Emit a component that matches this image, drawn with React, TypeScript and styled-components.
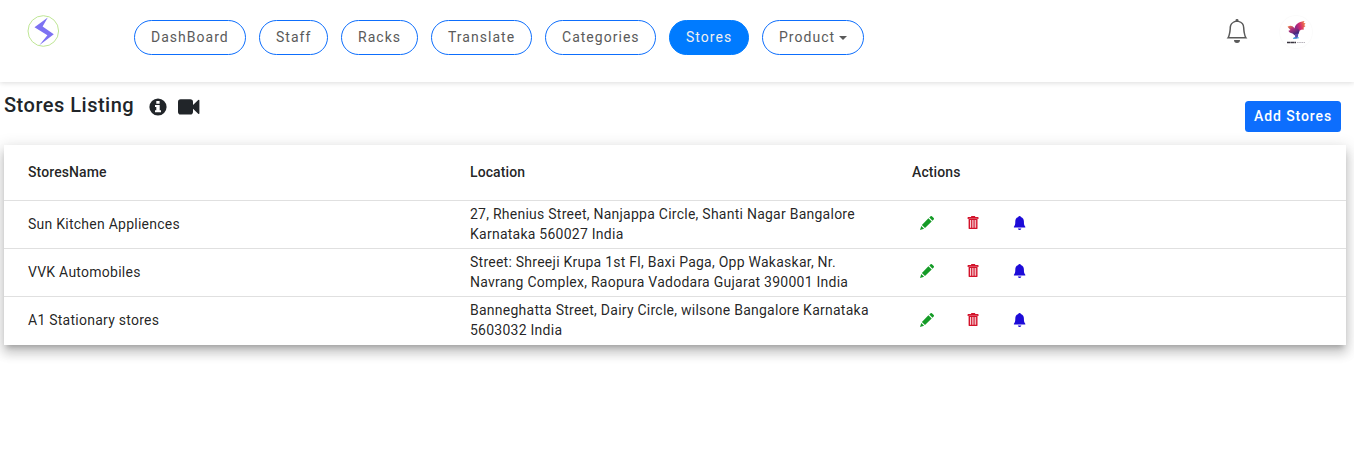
import React from 'react';
import styled, { createGlobalStyle, css } from 'styled-components';
import { BsBell } from 'react-icons/bs';

const GlobalStyle = createGlobalStyle`
  * { box-sizing: border-box; }
  body {
    margin: 0;
    min-height: 100vh;
    background: #fff;
    color: #212529;
    font-family: Roboto, 'Liberation Sans', sans-serif;
  }
`;

const Header = styled.header`
  display: flex;
  align-items: flex-start;
  height: 82px;
  padding: 15px 47px 0 27px;
  background: #fff;
  box-shadow: 0 1px 5px rgba(0, 0, 0, 0.14);
`;

const Logo = styled.svg`
  width: 33px;
  height: 33px;
  flex: none;
`;

const Nav = styled.nav`
  display: flex;
  gap: 13px;
  margin: 5px 0 0 74px;
  flex: 1;
`;

const Pill = styled.a<{ $width: number; $active?: boolean }>`
  display: flex;
  align-items: center;
  width: ${(p) => p.$width}px;
  height: 35px;
  padding: 0 0 1px 16px;
  border: 1px solid #0d6efd;
  border-radius: 20px;
  color: #5a5a5a;
  font-size: 14px;
  letter-spacing: 1.02px;
  white-space: nowrap;
  ${(p) =>
    p.$active &&
    css`
      background: #007bff;
      border-color: #007bff;
      color: #f0f0f0;
    `}
`;

const Caret = styled.span`
  margin: 2px 0 0 4px;
  border: 4px solid transparent;
  border-top-color: currentColor;
  border-bottom: 0;
`;

const HeaderTools = styled.div`
  display: flex;
  gap: 30px;
  color: #5a5a5a;
`;

const BellIcon = styled(BsBell)`
  width: 24px;
  height: 24px;
  margin-top: 4px;
`;

const Avatar = styled.svg`
  width: 34px;
  height: 34px;
  margin-right: -6px;
`;

const TitleBar = styled.section`
  display: flex;
  justify-content: space-between;
  height: 63px;
  padding: 0 13px 0 4px;
`;

const TitleGroup = styled.div`
  display: flex;
  align-items: flex-start;
  padding-top: 11px;
`;

const Title = styled.h1`
  margin: 0 15px 0 0;
  font-size: 20px;
  line-height: 24px;
  font-weight: 500;
  letter-spacing: 0.5px;
`;

const InfoIcon = styled.svg`
  width: 18px;
  height: 18px;
  margin: 5px 11px 0 0;
`;

const VideoIcon = styled.svg`
  width: 22px;
  height: 16px;
  margin-top: 6px;
`;

const AddButton = styled.button`
  width: 96px;
  height: 31px;
  margin-top: 19px;
  padding: 0;
  border: 0;
  border-radius: 3.5px;
  background: #0d6efd;
  color: #fff;
  font: 500 14px/21px Roboto, sans-serif;
  letter-spacing: 0.9px;
`;

const Table = styled.div`
  margin: 0 8px 0 4px;
  background: #fff;
  color: rgba(0, 0, 0, 0.87);
  box-shadow: 0 5px 5px -3px rgba(0, 0, 0, 0.2), 0 8px 10px 1px rgba(0, 0, 0, 0.14),
    0 3px 14px 2px rgba(0, 0, 0, 0.12);
`;

const Actions = styled.div`
  display: flex;
  padding: 0 0 2px 8px;
  gap: 32px;
`;

const Row = styled.div<{ $head?: boolean }>`
  display: grid;
  grid-template-columns: 442px 442px 1fr;
  align-items: center;
  height: ${(p) => (p.$head ? 56 : 48)}px;
  padding: 0 0 1px 24px;
  border-bottom: 1px solid rgba(0, 0, 0, 0.12);
  font-size: 14px;
  line-height: 20px;
  font-weight: ${(p) => (p.$head ? 500 : 400)};
  letter-spacing: ${(p) => (p.$head ? 0.1 : 0.25)}px;
  &:last-child {
    padding-bottom: 2px;
    border-bottom: 0;
  }
  &:last-child ${Actions} {
    padding-bottom: 0;
  }
`;

const Cell = styled.div`
  padding-right: 40px;
`;

const ActionIcon = styled.svg`
  width: 14px;
  height: 14px;
  display: block;
`;

const Pencil = () => (
  <ActionIcon viewBox="0 0 14 14" fill="#149b26">
    <path d="M0 14 1.3 9.9 4.1 12.7ZM1.9 9 8.4 2.3 11.7 5.6 5 12.1ZM9.3 1.5 10.6.3Q11.3-.3 11.9.3L13.7 2.1Q14.3 2.7 13.7 3.4L12.5 4.7Z" />
  </ActionIcon>
);

const Trash = () => (
  <ActionIcon viewBox="-0.8 0 14 14">
    <path
      fill="#d3132b"
      fillRule="evenodd"
      d="M4.3.9V.3Q4.3 0 4.6 0H8.1Q8.4 0 8.4.3V.9H11.2Q11.7.9 11.7 1.4V3H.8V1.4Q.8.9 1.3.9ZM1.8 2.8H10.7V12.2Q10.7 13.1 9.8 13.1H2.7Q1.8 13.1 1.8 12.2ZM3.3 4V11.8H4.1V4ZM5.1 4V11.8H5.8V4ZM6.8 4V11.8H7.5V4ZM8.5 4V11.8H9.3V4Z"
    />
  </ActionIcon>
);

const SolidBell = () => (
  <ActionIcon viewBox="-0.8 0 14 14" fill="#1d0bd8">
    <path d="M6.8 0C7.6 0 8 .3 8.1.9 10.2 1.5 11.1 3.2 11.1 5.6 11.1 8.5 11.4 9.8 12.5 10.7V11.6H1.1V10.7C2.2 9.8 2.5 8.5 2.5 5.6 2.5 3.2 3.4 1.5 5.5.9 5.6.3 6 0 6.8 0ZM5 12.4H8.6Q8 14 6.8 14T5 12.4Z" />
  </ActionIcon>
);

const links = [
  { label: 'DashBoard', width: 112 },
  { label: 'Staff', width: 69 },
  { label: 'Racks', width: 77 },
  { label: 'Translate', width: 101 },
  { label: 'Categories', width: 111 },
  { label: 'Stores', width: 80, active: true },
  { label: 'Product', width: 102, menu: true },
];

const stores = [
  {
    name: 'Sun Kitchen Appliences',
    location: '27, Rhenius Street, Nanjappa Circle, Shanti Nagar Bangalore Karnataka 560027 India',
  },
  {
    name: 'VVK Automobiles',
    location:
      'Street: Shreeji Krupa 1st Fl, Baxi Paga, Opp Wakaskar, Nr. Navrang Complex, Raopura Vadodara Gujarat 390001 India',
  },
  {
    name: 'A1 Stationary stores',
    location: 'Banneghatta Street, Dairy Circle, wilsone Bangalore Karnataka 5603032 India',
  },
];

export default function App() {
  return (
    <>
      <GlobalStyle />
      <Header>
        <Logo viewBox="0 0 33 33">
          <circle cx="16.3" cy="16" r="15.3" fill="#fff" stroke="#bfe695" />
          <path d="M20.8 2.6 7.5 12.2 20.4 20.3 12.3 30.2 26.8 19.2 15.6 11.6Z" fill="#7d72f2" />
        </Logo>
        <Nav>
          {links.map((l) => (
            <Pill key={l.label} $width={l.width} $active={l.active}>
              {l.label}
              {l.menu && <Caret />}
            </Pill>
          ))}
        </Nav>
        <HeaderTools>
          <BellIcon />
          <Avatar viewBox="0 0 34 34">
            <defs>
              <linearGradient id="wing" x1="0" y1="0.6" x2="1" y2="0.3">
                <stop offset="0" stopColor="#7a2790" />
                <stop offset="0.5" stopColor="#d42b70" />
                <stop offset="1" stopColor="#f0803f" />
              </linearGradient>
              <linearGradient id="body" x1="0" y1="0" x2="0.7" y2="1">
                <stop offset="0" stopColor="#f58a3d" />
                <stop offset="0.4" stopColor="#b0307c" />
                <stop offset="1" stopColor="#26247c" />
              </linearGradient>
            </defs>
            <circle cx="17" cy="17" r="16.5" fill="#fff" stroke="#fbfbfb" />
            <path d="M15.5 14C16 9.5 19 7 25.5 6L24.5 8 26.5 8.3 25.2 10.2 26.5 11 24.5 12.8 25 14.5 22 14.8 19 17Z" fill="url(#wing)" />
            <path d="M8.5 11.8Q11 10 13.5 11.2L16 13.5 19 13.5 20.5 16 19.5 19 16 20.5 13.5 18.5Q10 18 9.5 15.8L11.5 15Z" fill="url(#body)" />
            <path d="M15.8 19 19.2 18.4 19 21.5 17.5 23.8H14L16.2 21.8Z" fill="#5b4bae" />
            <path d="M14.5 22.6H17.6L17 24H14ZM18 22H19.6V23.5H18Z" fill="#4dabe0" />
            <path d="M8 27.5H17" stroke="#39343f" strokeWidth="1.5" strokeDasharray="3.4 .3" />
            <path d="M18 27.5H26" stroke="#b9b5bd" strokeWidth="1.2" strokeDasharray="1.6 .6" />
          </Avatar>
        </HeaderTools>
      </Header>
      <TitleBar>
        <TitleGroup>
          <Title>Stores Listing</Title>
          <InfoIcon viewBox="0 0 18 18">
            <circle cx="9" cy="9" r="8.6" fill="#212529" />
            <path d="M7.3 3H10.6V5.7H7.3ZM6 7.1H10.7V12.2H12V14.2H6V12.2H7.3V9.1H6Z" fill="#fff" />
          </InfoIcon>
          <VideoIcon viewBox="0 0 22 16" fill="#212529">
            <path d="M2.6.3H12.2Q15 .3 15 3.1V6L20.2 1Q21.4.2 21.4 1.5V14.3Q21.4 15.6 20.2 14.8L15 9.8V12.7Q15 15.5 12.2 15.5H2.6Q0 15.5 0 12.7V3.1Q0 .3 2.6.3Z" />
          </VideoIcon>
        </TitleGroup>
        <AddButton>Add Stores</AddButton>
      </TitleBar>
      <Table>
        <Row $head>
          <Cell>StoresName</Cell>
          <Cell>Location</Cell>
          <Cell>Actions</Cell>
        </Row>
        {stores.map((s) => (
          <Row key={s.name}>
            <Cell>{s.name}</Cell>
            <Cell>{s.location}</Cell>
            <Actions>
              <Pencil />
              <Trash />
              <SolidBell />
            </Actions>
          </Row>
        ))}
      </Table>
    </>
  );
}
